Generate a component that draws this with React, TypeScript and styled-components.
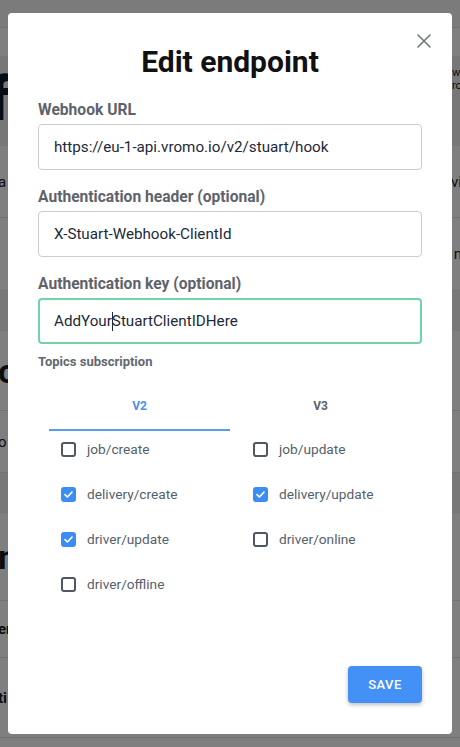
import React from 'react';
import styled, { createGlobalStyle, css } from 'styled-components';

// =============================================================================
// Data
// =============================================================================

type Topic = { name: string; checked: boolean };

const TOPICS: Topic[] = [
  { name: 'job/create', checked: false },
  { name: 'job/update', checked: false },
  { name: 'delivery/create', checked: true },
  { name: 'delivery/update', checked: true },
  { name: 'driver/update', checked: true },
  { name: 'driver/online', checked: false },
  { name: 'driver/offline', checked: false },
];

// =============================================================================
// Main Component
// =============================================================================

const Field = ({ label, value, focused, caret }: { label: string; value: string; focused?: boolean; caret?: number }) => (
  <FieldGroup>
    <Label>{label}</Label>
    <InputBox $focused={focused}>
      {caret === undefined ? (
        value
      ) : (
        <>
          {value.slice(0, caret)}
          <Caret />
          {value.slice(caret)}
        </>
      )}
    </InputBox>
  </FieldGroup>
);

const Checkbox = ({ checked }: { checked: boolean }) => (
  <Box $checked={checked}>
    {checked && (
      <svg width="11" height="11" viewBox="0 0 12 12">
        <path d="M2.2 6.2 L4.8 8.7 L9.8 3.4" fill="none" stroke="#fff" strokeWidth="1.8" strokeLinecap="round" strokeLinejoin="round" />
      </svg>
    )}
  </Box>
);

// the page that sits dimmed behind the dialog
const BackgroundPage = () => (
  <Page>
    <TopBar />
    <Banner>
      <BigLetter>f</BigLetter>
      <SideText>
        w
        <br />
        ro
      </SideText>
    </Banner>
    <PageRow $h={72}>
      <EdgeText>a</EdgeText>
      <EdgeText>vi</EdgeText>
    </PageRow>
    <PageRow $h={73}>
      <span />
      <EdgeText>n</EdgeText>
    </PageRow>
    <GreyBand />
    <PageRow $h={80}>
      <EdgeText $size={34}>o</EdgeText>
      <span />
    </PageRow>
    <PageRow $h={62}>
      <EdgeText>o</EdgeText>
      <span />
    </PageRow>
    <GreyBand />
    <PageRow $h={88}>
      <EdgeText $size={34}>m</EdgeText>
      <span />
    </PageRow>
    <PageRow $h={57}>
      <EdgeText $bold>er</EdgeText>
      <span />
    </PageRow>
    <PageRow $h={80}>
      <EdgeText $bold>ti</EdgeText>
      <span />
    </PageRow>
  </Page>
);

export default function App() {
  return (
    <>
      <GlobalStyle />
      <BackgroundPage />
      <Overlay>
        <Modal>
          <CloseButton aria-label="Close">
            <svg width="14" height="14" viewBox="0 0 14 14">
              <path d="M1 1 L13 13 M13 1 L1 13" stroke="#6f747b" strokeWidth="1.6" strokeLinecap="round" />
            </svg>
          </CloseButton>
          <Title>Edit endpoint</Title>
          <Field label="Webhook URL" value="https://eu-1-api.vromo.io/v2/stuart/hook" />
          <Field label="Authentication header (optional)" value="X-Stuart-Webhook-ClientId" />
          <Field label="Authentication key (optional)" value="AddYourStuartClientIDHere" focused caret={7} />
          <SmallLabel>Topics subscription</SmallLabel>
          <Tabs>
            <Tab $active>V2</Tab>
            <Tab>V3</Tab>
          </Tabs>
          <TopicGrid>
            {TOPICS.map((t) => (
              <TopicItem key={t.name}>
                <Checkbox checked={t.checked} />
                <TopicName>{t.name}</TopicName>
              </TopicItem>
            ))}
          </TopicGrid>
          <Footer>
            <SaveButton>SAVE</SaveButton>
          </Footer>
        </Modal>
      </Overlay>
    </>
  );
}

// =============================================================================
// Styled Components
// =============================================================================

const GlobalStyle = createGlobalStyle`
  html, body {
    margin: 0;
    padding: 0;
    background: #ffffff;
    font-family: Roboto, "Liberation Sans", sans-serif;
    overflow: hidden;
  }
`;

const Page = styled.div`
  width: 460px;
  height: 747px;
  background: #ffffff;
  overflow: hidden;
  display: flex;
  flex-direction: column;
`;

const TopBar = styled.div`
  flex: none;
  height: 27px;
  margin-bottom: 28px;
  background: #f6f6f6;
  border-bottom: 1px solid #e3e3e3;
`;

const Banner = styled.div`
  flex: none;
  height: 90px;
  background: #eeeeee;
  display: flex;
  justify-content: space-between;
  align-items: flex-start;
`;

const BigLetter = styled.span`
  font-size: 62px;
  font-weight: 900;
  color: #0d1b2e;
  margin-left: -12px;
  margin-top: 12px;
  line-height: 1;
`;

const SideText = styled.span`
  font-size: 11px;
  color: #222;
  margin-right: -6px;
  margin-top: 10px;
  width: 14px;
  line-height: 13px;
  overflow: hidden;
`;

const PageRow = styled.div<{ $h: number }>`
  flex: none;
  height: ${({ $h }) => $h}px;
  box-sizing: border-box;
  display: flex;
  justify-content: space-between;
  align-items: center;
  border-bottom: 1px solid #e6e6e6;
  overflow: hidden;
`;

const EdgeText = styled.span<{ $size?: number; $bold?: boolean }>`
  font-size: ${({ $size }) => $size ?? 15}px;
  font-weight: ${({ $bold, $size }) => ($bold || $size ? 700 : 400)};
  color: #1a1a1a;
  margin: 0 -2px;
  max-width: 14px;
  overflow: hidden;
`;

const GreyBand = styled.div`
  flex: none;
  height: 40px;
  background: #f1f1f1;
`;

const Overlay = styled.div`
  position: fixed;
  inset: 0;
  background: rgba(0, 0, 0, 0.5);
  display: flex;
  align-items: flex-start;
  justify-content: center;
  padding-top: 13px;
`;

const Modal = styled.div`
  position: relative;
  box-sizing: border-box;
  width: 444px;
  height: 721px;
  background: #ffffff;
  border-radius: 4px;
  padding: 31px 30px 31px;
  display: flex;
  flex-direction: column;
`;

const CloseButton = styled.button`
  position: absolute;
  top: 21px;
  right: 21px;
  width: 14px;
  height: 14px;
  padding: 0;
  border: none;
  background: none;
  display: flex;
`;

const Title = styled.h1`
  margin: 0 0 20px;
  text-align: center;
  font-size: 30px;
  line-height: 36px;
  font-weight: 700;
  color: #111111;
`;

const FieldGroup = styled.div`
  display: flex;
  flex-direction: column;
  & + & {
    margin-top: 17px;
  }
`;

const Label = styled.label`
  font-size: 15.6px;
  line-height: 20px;
  font-weight: 700;
  color: #5e636b;
  margin-bottom: 4px;
`;

const InputBox = styled.div<{ $focused?: boolean }>`
  box-sizing: border-box;
  height: 46px;
  display: flex;
  align-items: center;
  padding: 0 15px;
  border: 1px solid #c9cdd3;
  border-radius: 4px;
  font-size: 15.2px;
  color: #1d2939;
  white-space: nowrap;
  ${({ $focused }) =>
    $focused &&
    css`
      border: 2px solid #72d3a9;
      padding: 0 14px;
    `}
`;

const Caret = styled.span`
  display: inline-block;
  width: 1px;
  height: 19px;
  background: #1d2939;
  margin: 0 -1px 0 0;
`;

const SmallLabel = styled.div`
  margin-top: 9px;
  font-size: 13px;
  line-height: 18px;
  font-weight: 700;
  color: #62686f;
`;

const Tabs = styled.div`
  margin: 12px 11px 0;
  display: grid;
  grid-template-columns: 1fr 1fr;
`;

const Tab = styled.div<{ $active?: boolean }>`
  height: 48px;
  box-sizing: border-box;
  display: flex;
  align-items: center;
  justify-content: center;
  font-size: 12px;
  font-weight: 700;
  color: ${({ $active }) => ($active ? '#4a8fe8' : '#5c6269')};
  border-bottom: 2px solid ${({ $active }) => ($active ? '#5a9bed' : 'transparent')};
`;

const TopicGrid = styled.div`
  margin: 10px 0 0 23px;
  display: grid;
  grid-template-columns: 192px 192px;
  row-gap: 29px;
`;

const TopicItem = styled.label`
  display: flex;
  align-items: center;
  gap: 11px;
  height: 16px;
`;

const Box = styled.span<{ $checked: boolean }>`
  box-sizing: border-box;
  width: 15px;
  height: 15px;
  border-radius: 3px;
  display: flex;
  align-items: center;
  justify-content: center;
  border: 2px solid ${({ $checked }) => ($checked ? '#3b8df4' : '#4f5762')};
  background: ${({ $checked }) => ($checked ? '#3b8df4' : '#ffffff')};
`;

const TopicName = styled.span`
  font-size: 13.7px;
  color: #56606c;
`;

const Footer = styled.div`
  margin-top: auto;
  display: flex;
  justify-content: flex-end;
`;

const SaveButton = styled.button`
  width: 74px;
  height: 37px;
  border: none;
  border-radius: 4px;
  background: #4391f6;
  color: #ffffff;
  font-family: Roboto, "Liberation Sans", sans-serif;
  font-size: 13px;
  font-weight: 500;
  letter-spacing: 0.4px;
  box-shadow: 0 2px 4px rgba(0, 0, 0, 0.25);
`;
